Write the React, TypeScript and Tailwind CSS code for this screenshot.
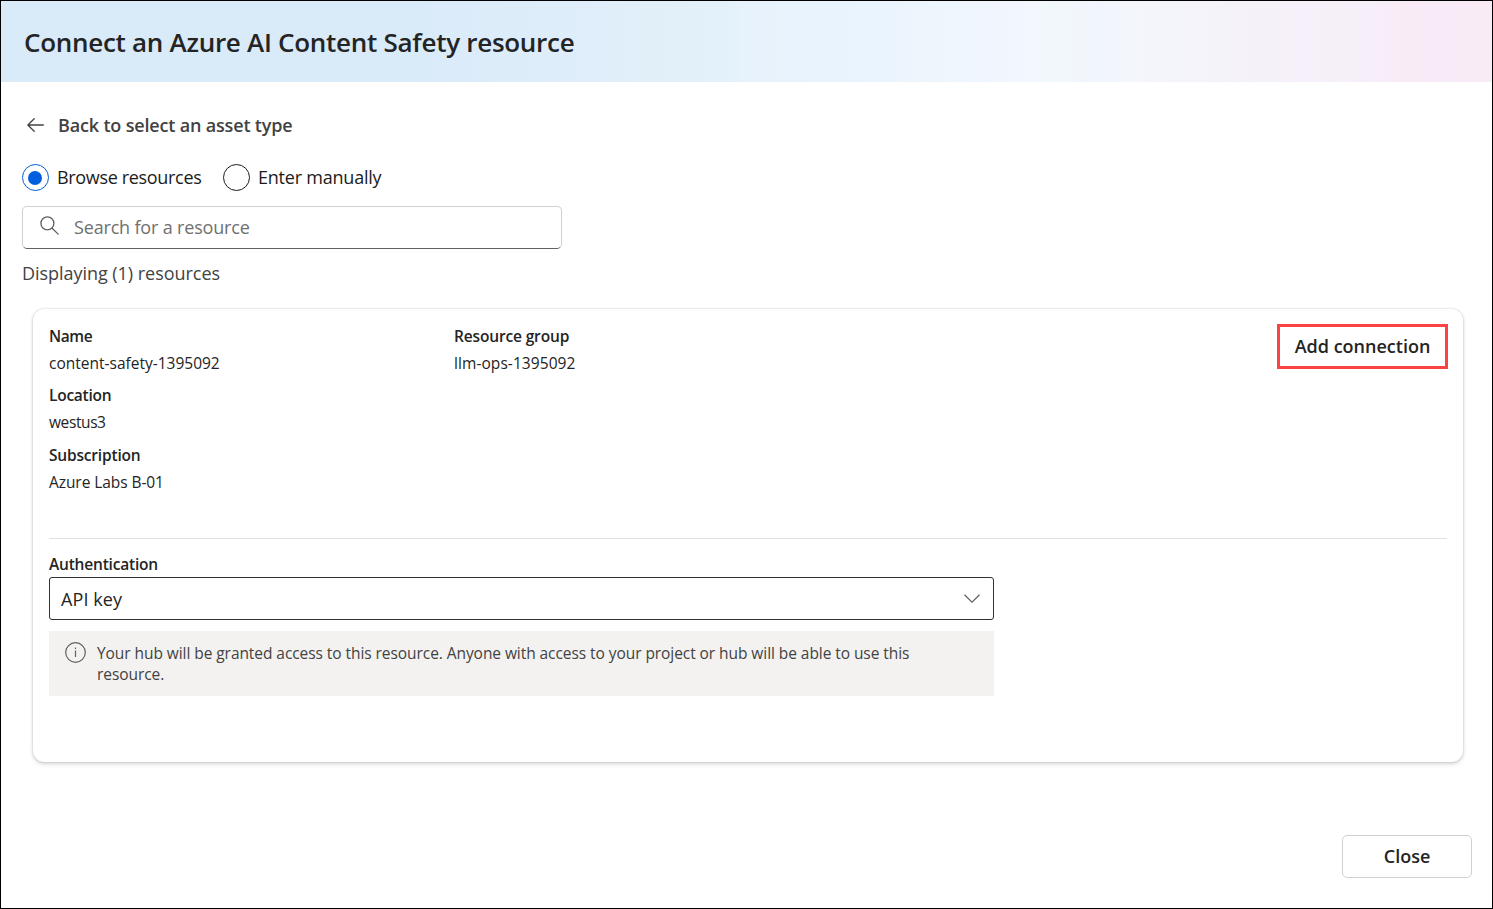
import React from "react";

function Field({ label, value, labelClass, valueClass }: { label: string; value: string; labelClass: string; valueClass: string }) {
  return (
    <div className="flex flex-col items-start whitespace-nowrap text-[15.5px] text-[#242424]">
      <span className={`h-[27px] font-semibold leading-[27px] ${labelClass}`}>{label}</span>
      <span className={`h-[27px] leading-[27px] ${valueClass}`}>{value}</span>
    </div>
  );
}

export default function App() {
  return (
    <div className="flex h-[909px] w-[1493px] flex-col overflow-hidden border border-black bg-white font-['Open_Sans','Noto_Sans',sans-serif] text-[#242424]">
      <header className="flex h-[81px] shrink-0 items-center bg-[linear-gradient(90deg,#d9eaf8_0px,#d9eaf8_400px,#e0eefb_600px,#e1eff9_640px,#e3f1fb_725px,#e7f2fb_740px,#e9f4fe_880px,#ecf4fc_900px,#eef6fe_960px,#f1f5fe_1000px,#f3f7fe_1035px,#f1f8fb_1047px,#f2f6fb_1080px,#f1f5fe_1100px,#f3f6fa_1125px,#f4f4fa_1200px,#f5f1f8_1260px,#f6f0fb_1305px,#f5f0f7_1328px,#f6eefa_1375px,#f9ebf5_1405px,#f8ebf9_1440px,#f8ebf5_1480px)] pl-[23px]">
        <h1 className="whitespace-nowrap pt-px text-[26px] font-semibold leading-[36px] tracking-[-0.28px]">Connect an Azure AI Content Safety resource</h1>
      </header>

      <div className="flex flex-col items-start pl-[21px]">
        <a className="mt-[30px] flex h-[27px] items-center whitespace-nowrap text-[#424242]">
          <svg className="mb-0.5 ml-[5px] mr-[14px]" width="17" height="14" viewBox="0 0 17 14" fill="none" stroke="currentColor" strokeWidth="1.3" strokeLinecap="round" strokeLinejoin="round">
            <path d="M7.2.8.9 7l6.3 6.2M1 7h15.3" />
          </svg>
          <span className="text-[18px] font-semibold tracking-[-0.17px]">Back to select an asset type</span>
        </a>

        <div className="mt-[25px] flex h-[27px] items-center whitespace-nowrap text-[18px] text-[#1b1b1b]">
          <span className="flex size-[27px] items-center justify-center rounded-full border-[1.3px] border-[#005fde]">
            <span className="mr-px size-[14px] rounded-full bg-[#005fde]" />
          </span>
          <span className="ml-2 w-[166px] tracking-[-0.33px]">Browse resources</span>
          <span className="size-[27px] rounded-full border-[1.3px] border-[#1b1b1b]" />
          <span className="ml-2 tracking-[-0.22px]">Enter manually</span>
        </div>

        <div className="mt-[15px] flex h-[43px] w-[540px] items-center rounded-[5px] border border-[#d1d1d1] border-b-[#616161] pl-[17px] text-[18px] text-[#707070]">
          <svg className="mb-1 mr-[15px]" width="19" height="19" viewBox="0 0 20 20" fill="none" stroke="#616161" strokeWidth="1.4" strokeLinecap="round">
            <circle cx="7.8" cy="7.8" r="6.8" />
            <path d="m12.8 12.8 6.3 6.3" />
          </svg>
          <span className="whitespace-nowrap tracking-[-0.17px]">Search for a resource</span>
        </div>
        <p className="mt-[11px] h-[27px] whitespace-nowrap text-[18px] leading-[27px] tracking-[-0.04px] text-[#424242]">Displaying (1) resources</p>
      </div>

      <section className="ml-[32px] mt-[22px] flex h-[453px] w-[1430px] shrink-0 flex-col rounded-[11px] bg-white px-4 shadow-[0_0_2px_rgba(0,0,0,0.22),0_2px_4px_rgba(0,0,0,0.16)]">
        <div className="flex h-[229px] items-start pt-[15px]">
          <div className="-mt-px flex w-[405px] flex-col gap-[5.4px]">
            <Field label="Name" value="content-safety-1395092" labelClass="tracking-[-0.4px]" valueClass="" />
            <Field label="Location" value="westus3" labelClass="tracking-[-0.25px]" valueClass="tracking-[-0.4px]" />
            <Field label="Subscription" value="Azure Labs B-01" labelClass="tracking-[-0.18px]" valueClass="tracking-[-0.07px]" />
          </div>
          <div className="-mt-px">
            <Field label="Resource group" value="llm-ops-1395092" labelClass="tracking-[-0.15px]" valueClass="tracking-[0.07px]" />
          </div>
          <button className="-mr-px ml-auto flex h-[45px] w-[171px] items-center justify-center whitespace-nowrap border-[3px] border-[#fc4343] text-[18px] font-semibold">Add connection</button>
        </div>
        <div className="h-px bg-[#e0e0e0]" />
        <label className="mt-[12px] h-[26px] whitespace-nowrap text-[15.5px] font-semibold leading-[26px] tracking-[-0.2px]">Authentication</label>
        <div className="flex h-[43px] w-[945px] items-center justify-between rounded-[3px] border border-[#323130] pl-[11px] pr-[13px] text-[18px]">
          <span className="pt-0.5 tracking-[0.1px]">API key</span>
          <svg className="mb-px" width="16" height="9" viewBox="0 0 16 9" fill="none" stroke="#616161" strokeWidth="1.2">
            <path d="m.5.8 7.5 7.3L15.5.8" />
          </svg>
        </div>
        <div className="mt-[11px] flex h-[65px] w-[945px] bg-[#f3f2f1] pl-4 pt-[11px] text-[15.5px] leading-[21px] tracking-[-0.065px] text-[#424242]">
          <svg className="mr-[11px] shrink-0" width="21" height="21" viewBox="0 0 21 21" fill="none" stroke="#616161" strokeWidth="1.2">
            <circle cx="10.5" cy="10.5" r="9.8" />
            <path d="M10.5 8.5v6.500M10.5 5.500v1.500" />
          </svg>
          <p className="whitespace-nowrap pt-px">Your hub will be granted access to this resource. Anyone with access to your project or hub will be able to use this<br />resource.</p>
        </div>
      </section>

      <footer className="mt-[73px] flex justify-end pr-5">
        <button className="flex h-[43px] w-[130px] items-center justify-center rounded-[5px] border border-[#d1d1d1] text-[18px] font-semibold">Close</button>
      </footer>
    </div>
  );
}
